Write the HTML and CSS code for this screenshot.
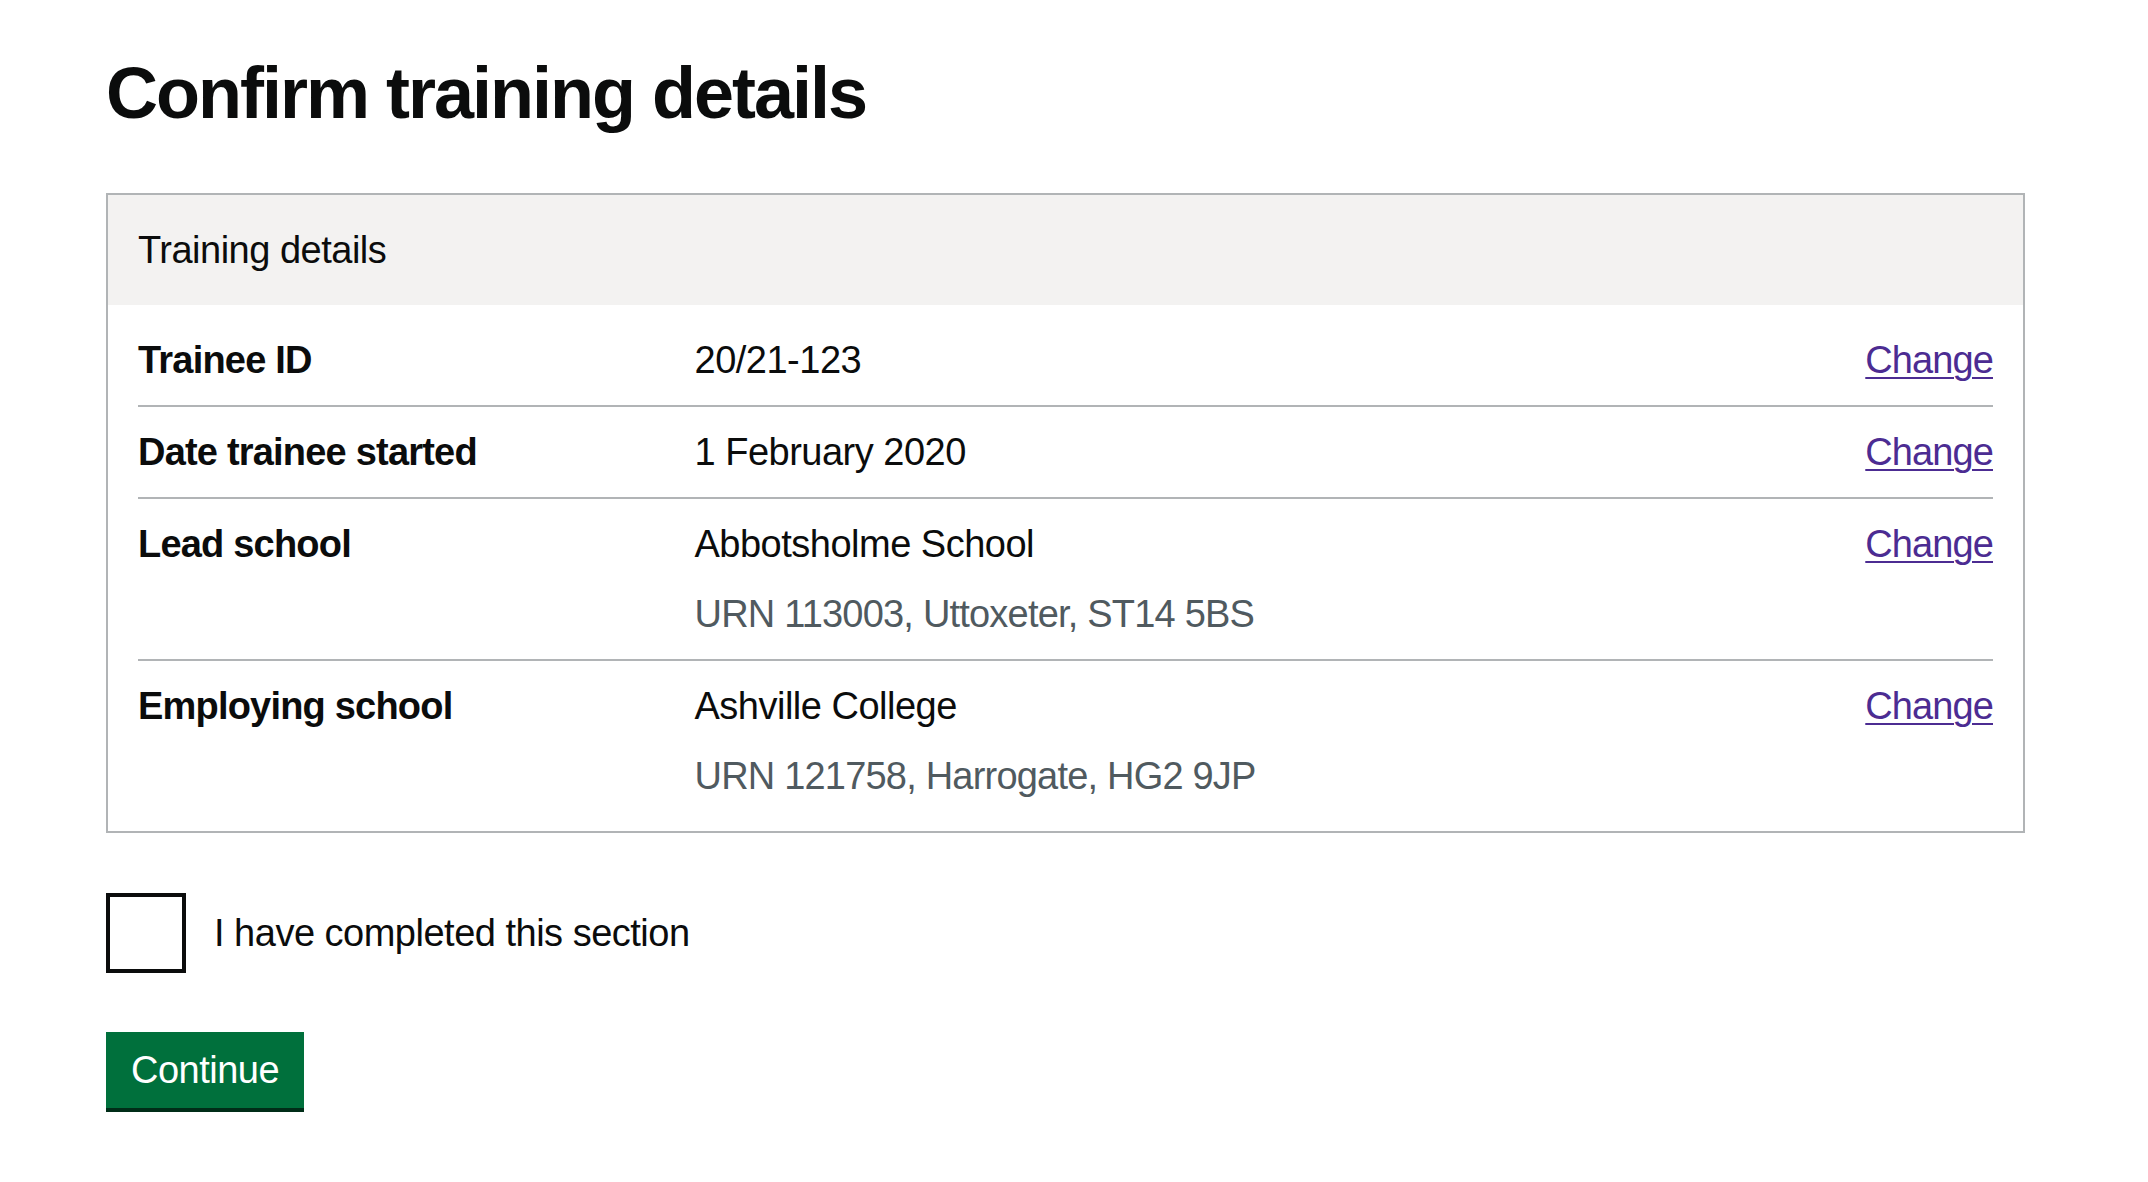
FILE: index.html
```html
<!DOCTYPE html>
<html lang="en">
<head>
<meta charset="utf-8">
<title>Confirm training details</title>
<link rel="stylesheet" href="styles.css">
</head>
<body>
<main class="page">
  <h1 class="heading">Confirm training details</h1>

  <section class="card">
    <div class="card-header">
      <h2 class="card-title">Training details</h2>
    </div>
    <dl class="summary">
      <div class="row">
        <dt class="key">Trainee ID</dt>
        <dd class="value"><p class="line">20/21-123</p></dd>
        <dd class="actions"><a class="link" href="#">Change</a></dd>
      </div>
      <div class="row">
        <dt class="key">Date trainee started</dt>
        <dd class="value"><p class="line">1 February 2020</p></dd>
        <dd class="actions"><a class="link" href="#">Change</a></dd>
      </div>
      <div class="row">
        <dt class="key">Lead school</dt>
        <dd class="value">
          <p class="line">Abbotsholme School</p>
          <p class="line secondary">URN 113003, Uttoxeter, ST14 5BS</p>
        </dd>
        <dd class="actions"><a class="link" href="#">Change</a></dd>
      </div>
      <div class="row">
        <dt class="key">Employing school</dt>
        <dd class="value">
          <p class="line">Ashville College</p>
          <p class="line secondary">URN 121758, Harrogate, HG2 9JP</p>
        </dd>
        <dd class="actions"><a class="link" href="#">Change</a></dd>
      </div>
    </dl>
  </section>

  <div class="checkbox-item">
    <input class="checkbox" type="checkbox" id="completed">
    <label class="checkbox-label" for="completed">I have completed this section</label>
  </div>

  <button class="button" type="submit">Continue</button>
</main>
</body>
</html>
```

FILE: styles.css
```css
html, body {
  margin: 0;
  padding: 0;
  background: #ffffff;
}

body {
  font-family: "Liberation Sans", Arial, sans-serif;
  color: #0b0c0c;
  font-size: 38px;
  line-height: 50px;
  letter-spacing: -0.5px;
}

.page {
  width: 1919px;
  padding: 53px 0 80px 106px;
  display: flex;
  flex-direction: column;
  align-items: flex-start;
}

.heading {
  margin: 0 0 60px 0;
  font-size: 72px;
  line-height: 80px;
  font-weight: 700;
  letter-spacing: -2px;
}

.card {
  align-self: stretch;
  border: 2px solid #b1b4b6;
}

.card-header {
  background: #f3f2f1;
  padding: 30px 30px;
}

.card-title {
  margin: 0;
  font-size: 38px;
  line-height: 50px;
  font-weight: 400;
}

.summary {
  margin: 0;
  padding: 10px 30px 10px;
}

.row {
  display: grid;
  grid-template-columns: 30% 50% 20%;
  padding: 20px 0;
  border-bottom: 2px solid #b1b4b6;
}

.row:last-child {
  border-bottom: 0;
}

.key {
  margin: 0;
  font-weight: 700;
  letter-spacing: -0.8px;
  padding-right: 40px;
}

.value {
  margin: 0;
  padding-right: 40px;
}

.line {
  margin: 0;
}

.line + .line {
  margin-top: 20px;
}

.secondary {
  color: #505a5f;
  letter-spacing: -0.8px;
}

.actions {
  margin: 0;
  text-align: right;
}

.link {
  color: #4c2c92;
  letter-spacing: -0.9px;
  text-decoration: underline;
  text-decoration-thickness: 2px;
  text-underline-offset: 4px;
}

.checkbox-item {
  display: flex;
  align-items: center;
  gap: 28px;
  margin-top: 60px;
}

.checkbox {
  appearance: none;
  -webkit-appearance: none;
  margin: 0;
  width: 80px;
  height: 80px;
  border: 4px solid #0b0c0c;
  background: #ffffff;
  box-sizing: border-box;
}

.checkbox-label {
  font-size: 38px;
  line-height: 50px;
}

.button {
  margin-top: 59px;
  font-family: "Liberation Sans", Arial, sans-serif;
  font-size: 38px;
  line-height: 50px;
  letter-spacing: -0.5px;
  color: #ffffff;
  background: #00703c;
  border: 0;
  border-radius: 0;
  padding: 13px 25px;
  box-shadow: 0 4px 0 #002d18;
  cursor: pointer;
}
```
